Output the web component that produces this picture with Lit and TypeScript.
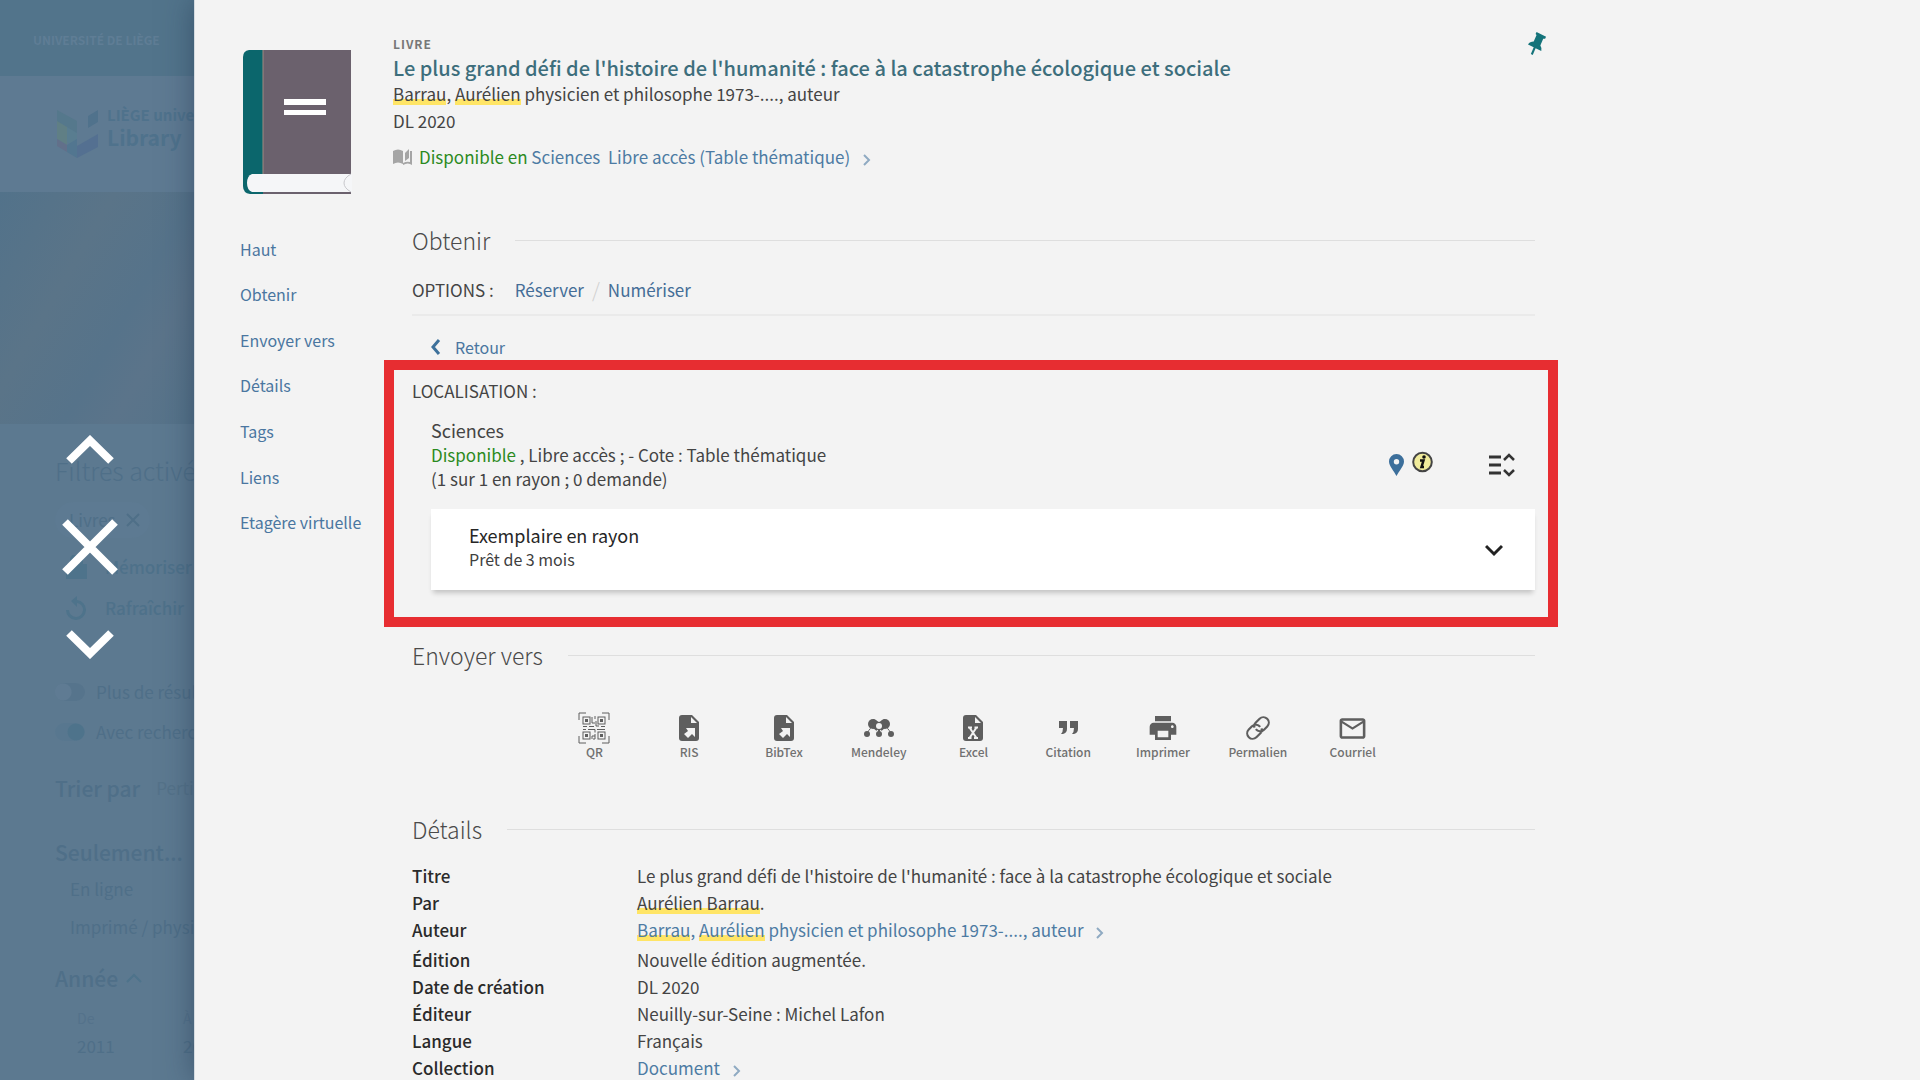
import { LitElement, html, css, svg, type TemplateResult } from "lit";
import { customElement, property } from "lit/decorators.js";

const chevronRight = html`<svg class="chev" viewBox="0 0 10 16" aria-hidden="true"><path d="M2 3l5 5-5 5" /></svg>`;

const fileShape = svg`<path d="M4 0h10l7 7v16a3 3 0 0 1-3 3H4a3 3 0 0 1-3-3V3a3 3 0 0 1 3-3z"/><path class="hole" d="M13 2v6h6z"/>`;

const exportArrow = svg`<path class="hole" d="M8 13h9v9l-3-3-4 4-2-2-2-2 4-3z"/>`;

const qrFinder = (x: number, y: number) => svg`
  <rect class="line" x=${x} y=${y} width="7" height="7"/>
  <rect x=${x + 2} y=${y + 2} width="3" height="3"/>`;

const icons: Record<string, TemplateResult> = {
  QR: html`<svg class="i32" viewBox="0 0 32 32">
    <path class="line" d="M1 8V1h7M24 1h7v7M31 24v7h-7M8 31H1v-7" />
    ${qrFinder(5, 5)}${qrFinder(20, 5)}${qrFinder(5, 20)}${qrFinder(20, 20)}
    <path class="line" d="M14 5v6h3M17 4v3M18 9v5h3M5 14.500h4M11 14.500h5M23 14.500h4M5 17.500h3M10 17.500h7v3M19 17.500h8M14 27v-3h3M17 22v5h-2" />
  </svg>`,
  file: html`<svg class="i26" viewBox="0 0 22 26">${fileShape}${exportArrow}</svg>`,
  Mendeley: html`<svg class="i32" viewBox="0 0 32 32">
    <path class="line" d="M4 23c0-4 3-5 5-9M28 23c0-4-3-5-5-9M16 23v-7" />
    <circle cx="10" cy="12" r="5" /><circle cx="22" cy="12" r="5" />
    <path d="M10 7l6 3 6-3v9l-6 5-6-5z" /><path class="hole" d="M13 19l3-2 3 2v5h-6z" />
    <path d="M15 17h2v6h-2z" />
    <circle class="hole" cx="16" cy="14" r="3" />
    <circle cx="4" cy="22" r="3" /><circle cx="16" cy="22" r="3" /><circle cx="28" cy="22" r="3" />
  </svg>`,
  Excel: html`<svg class="i26" viewBox="0 0 22 26">${fileShape}<path class="cross" d="M7.500 12.500l7 10.500M14.500 12.500l-7 10.500M6 12.500h4M12.500 12.500h3.500M6 23h3.500M12 23h4" /></svg>`,
  Citation: html`<svg class="i32" viewBox="0 0 32 32"><path d="M7 9h8v8q0 4-4 5H9q2-2 2-6H7zM18 9h8v8q0 4-4 5h-2q2-2 2-6h-4z" /></svg>`,
  Imprimer: html`<svg class="i32" viewBox="0 0 24 24"><path d="M19 8H5c-1.660 0-3 1.340-3 3v6h4v4h12v-4h4v-6c0-1.660-1.340-3-3-3zm-3 11H8v-5h8v5zm3-7c-.55 0-1-.45-1-1s.45-1 1-1 1 .45 1 1-.45 1-1 1zm-1-9H6v4h12V3z" /></svg>`,
  Permalien: html`<svg class="i26" viewBox="0 0 24 24"><path class="link" d="M10 13a5 5 0 0 0 7.540.540l3-3a5 5 0 0 0-7.070-7.070l-3.700 3.700q-2 2-1 4.500M14 11a5 5 0 0 0-7.540-.540l-3 3a5 5 0 0 0 7.070 7.070l3.700-3.700q2-2 1-4.500" /></svg>`,
  Courriel: html`<svg class="i31" viewBox="0 0 24 24"><path d="M22 6c0-1.100-.9-2-2-2H4c-1.100 0-2 .9-2 2v12c0 1.100.9 2 2 2h16c1.100 0 2-.9 2-2V6zm-2 0l-8 5-8-5h16zm0 12H4V8l8 5 8-5v10z" /></svg>`,
};

const base = css`
  * { box-sizing: border-box; }
  h1, h2, h3, p, dl, dd, dt, ul { margin: 0; padding: 0; font-weight: inherit; font-size: inherit; }
  ul { list-style: none; }
  a { color: inherit; text-decoration: none; }
  button { font: inherit; color: inherit; background: none; border: 0; padding: 0; cursor: pointer; text-align: left; }
  svg { display: block; flex: none; }
`;

@customElement("results-backdrop")
export class ResultsBackdrop extends LitElement {
  static styles = [base, css`
    :host { display: block; height: 100%; overflow: hidden; background: #5c7990; color: #4f6f88; font-size: 17px; line-height: 24px; white-space: nowrap; }
    .bar { height: 76px; background: #52748b; color: #5f7d95; padding: 28px 33px; font-size: 12px; font-weight: 700; }
    .brand { height: 116px; background: #5e7a92; color: #4f728c; display: flex; gap: 9px; padding: 29px 0 0 57px; font-weight: 700; }
    .logo { width: 41px; height: 48px; margin-top: 5px; }
    .uni { font-size: 15px; line-height: 20px; }
    .lib { font-size: 21px; line-height: 24px; }
    .hero { height: 232px; background: linear-gradient(120deg, #52728a, #5a7488 35%, #56738a 60%, #5b748a 75%, #55738a); }
    .filters { padding: 29px 0 0 55px; }
    .title { font-size: 25px; line-height: 34px; font-weight: 300; }
    .chip { display: inline-flex; align-items: center; gap: 10px; height: 36px; margin-top: 15px; padding: 0 10px 0 14px; border-radius: 18px; background: #5d7a92; }
    .chip svg { width: 14px; height: 14px; stroke: #4f6f88; stroke-width: 2; }
    .acts { padding-top: 8px; }
    .act { display: flex; align-items: center; gap: 18px; padding-left: 11px; height: 41px; font-weight: 500; color: #4e718a; }
    .act svg { width: 21px; height: 24px; fill: #4e738b; }
    .toggles { padding-top: 44px; }
    .toggle { display: flex; align-items: center; gap: 11px; height: 40px; }
    .toggle input { appearance: none; flex: none; margin: 0; width: 30px; height: 18px; border-radius: 9px; background: radial-gradient(circle at 8px 9px, #5f7b93 8px, #56748c 9px); }
    .toggle input:checked { background: radial-gradient(circle at 21px 9px, #4e738b 8px, #58778f 9px); }
    .sort { display: flex; align-items: center; gap: 16px; margin-top: 20px; height: 32px; }
    .sort select { appearance: none; border: 0; background: none; font: inherit; color: #547289; padding: 0; }
    .head { font-size: 21px; font-weight: 500; line-height: 32px; display: flex; align-items: center; gap: 8px; }
    .group { margin-top: 32px; }
    .facets { padding: 2px 0 0 15px; line-height: 38px; }
    .year { margin-top: 16px; }
    .year svg { width: 16px; height: 10px; fill: none; stroke: #4e738b; stroke-width: 2; }
    .years { display: grid; grid-template-columns: 106px 60px; padding: 11px 0 0 22px; color: #54728b; }
    .years label { font-size: 14px; display: grid; line-height: 26px; }
    .years input { border: 0; background: none; width: 60px; height: 28px; padding: 0; font: inherit; font-size: 17px; color: #4f6f88; }
  `];

  render() {
    return html`
      <div class="bar">UNIVERSITÉ DE LIÈGE</div>
      <div class="brand">
        <svg class="logo" viewBox="0 0 41 48" aria-hidden="true">
          <path fill="#55788c" d="M0 0l20 11v18L0 18z" /><path fill="#607f85" d="M0 11l10 6v18L0 29z" />
          <path fill="#597d90" d="M10 17l10 6v15l-10-6z" /><path fill="#62708a" d="M0 29l10 6v7L0 36z" />
          <path fill="#527690" d="M10 35l10-6v19l-10-6z" /><path fill="#547091" d="M20 36l21-12v13L20 48z" />
          <path fill="#50728c" d="M31 6l10-6v12l-10 6z" />
        </svg>
        <div><div class="uni">LIÈGE université</div><div class="lib">Library</div></div>
      </div>
      <div class="hero"></div>
      <div class="filters">
        <h2 class="title">Filtres activés</h2>
        <div class="chip">Livres <svg viewBox="0 0 14 14"><path d="M1 1l12 12M13 1L1 13" /></svg></div>
        <div class="acts">
          <button class="act"><svg viewBox="0 0 21 24"><path d="M0 9h4V5a6 6 0 0 1 13 0v4h4v15H0zM7 9h7V5a3 3 0 0 0-7 0z" /></svg>Mémoriser</button>
          <button class="act"><svg viewBox="0 0 21 24"><path d="M11 0v4a10 10 0 1 1-11 10h3a7 7 0 1 0 8-7v4L5 5z" /></svg>Rafraîchir</button>
        </div>
        <div class="toggles">
          <label class="toggle"><input type="checkbox" />Plus de résultats</label>
          <label class="toggle"><input type="checkbox" checked />Avec recherche</label>
        </div>
        <div class="sort"><label class="head" for="sort">Trier par</label><select id="sort"><option>Pertinence</option></select></div>
        <h3 class="head group">Seulement...</h3>
        <ul class="facets"><li>En ligne</li><li>Imprimé / physique</li></ul>
        <h3 class="head year">Année <svg viewBox="0 0 16 10"><path d="M1 9l7-7 7 7" /></svg></h3>
        <div class="years">
          <label>De<input value="2011" /></label>
          <label>À<input value="2024" /></label>
        </div>
      </div>`;
  }
}

@customElement("section-heading")
export class SectionHeading extends LitElement {
  @property() label = "";
  static styles = [base, css`
    :host { display: block; }
    h2 { display: flex; align-items: center; gap: 25px; font-size: 23px; line-height: 32px; font-weight: 300; color: #4a4a4a; }
    h2::after { content: ""; flex: 1; height: 1px; background: #dedede; }
  `];
  render() {
    return html`<h2>${this.label}</h2>`;
  }
}

type Row = { name: string; value: TemplateResult | string; link?: boolean };

const rows: Row[] = [
  { name: "Titre", value: "Le plus grand défi de l'histoire de l'humanité : face à la catastrophe écologique et sociale" },
  { name: "Par", value: html`<mark>Aurélien Barrau</mark>.` },
  { name: "Auteur", value: html`<mark>Barrau</mark>, <mark>Aurélien</mark> physicien et philosophe 1973-...., auteur`, link: true },
  { name: "Édition", value: "Nouvelle édition augmentée." },
  { name: "Date de création", value: "DL 2020" },
  { name: "Éditeur", value: "Neuilly-sur-Seine : Michel Lafon" },
  { name: "Langue", value: "Français" },
  { name: "Collection", value: "Document", link: true },
];

const targets = ["QR", "RIS", "BibTex", "Mendeley", "Excel", "Citation", "Imprimer", "Permalien", "Courriel"];
const sections = ["Haut", "Obtenir", "Envoyer vers", "Détails", "Tags", "Liens", "Etagère virtuelle"];

@customElement("app-root")
export class AppRoot extends LitElement {
  static styles = [base, css`
    :host { display: grid; grid-template-columns: 194px 1fr; height: 100vh; overflow: hidden; font-family: "Noto Sans CJK SC", "Open Sans", sans-serif; font-size: 17px; line-height: 24px; color: #444; }
    .side { position: relative; min-height: 0; }
    .controls { position: absolute; inset: 0; display: flex; flex-direction: column; align-items: center; justify-content: center; gap: 55px; padding: 14px 15px 0 0; }
    .controls svg { fill: none; stroke: #fff; stroke-width: 8; }
    .arrow { width: 48px; height: 29px; }
    .close { width: 56px; height: 56px; }
    .panel { position: relative; background: #f3f3f3; border-left: 1px solid #d5dbe0; box-shadow: 0 0 28px rgba(30, 50, 75, 0.5); min-width: 0; overflow: hidden; }
    .record { display: grid; grid-template-columns: 153px minmax(0, 1fr); max-width: 1398px; padding: 32px 46px 0 45px; }
    .cover { width: 110px; height: 146px; margin: 17px 0 0 2px; }
    .brief { position: relative; min-height: 192px; }
    .pin { position: absolute; top: 0; right: 0; }
    .pin svg { width: 19px; height: 23px; fill: #14737a; }
    .type { font-size: 12px; line-height: 24px; font-weight: 700; color: #777; letter-spacing: 1px; }
    .name { font-size: 20px; line-height: 24px; font-weight: 500; color: #3d6e7c; }
    .by { line-height: 27px; }
    mark { color: inherit; background: linear-gradient(#ffe566, #ffe566) 0 18px / 100% 6px no-repeat; }
    .avail { display: flex; align-items: center; gap: 6px; margin-top: 11px; line-height: 24px; color: #4d7ba3; }
    .avail svg:first-child { width: 20px; height: 16px; fill: #a5a5a5; }
    .green { color: #2c8a1e; }
    .chev { display: inline-block; width: 10px; height: 16px; margin-left: 8px; fill: none; stroke: #8faac2; stroke-width: 2; vertical-align: -4px; }
    nav { display: grid; grid-auto-rows: 1fr; align-items: center; height: 319px; margin-top: 2px; color: #4a76a0; font-size: 16px; }
    .body { padding: 0 12px 0 19px; }
    .options { display: flex; align-items: center; padding: 16px 0 8px; border-bottom: 2px solid #eaeaea; margin-top: 2px; line-height: 32px; }
    .opt { color: #446d97; }
    .caps { margin-right: 21px; }
    .slash { color: #d0d0d0; margin: 0 8px; font-size: 20px; font-weight: 300; }
    .back { display: flex; align-items: center; gap: 14px; margin: 18px 0 0 18px; color: #4a76a0; font-size: 16px; line-height: 26px; }
    .back svg { width: 11px; height: 16px; fill: none; stroke: #3d719b; stroke-width: 3; }
    .holding { position: relative; margin-top: 1px; padding: 18px 0 24px; }
    .frame { position: absolute; inset: -1px -23px -13px -28px; border: 10px solid #e72d31; pointer-events: none; }
    .place { display: flex; align-items: flex-end; padding: 14px 20px 18px 19px; }
    .where { flex: 1; }
    .where h3 { font-size: 18px; line-height: 26px; }
    .where p { line-height: 24px; }
    .tools { display: flex; align-items: center; gap: 8px; padding-bottom: 13px; }
    .map { width: 15px; height: 22px; fill: #3c6f9b; }
    .info { width: 21px; height: 27px; }
    .collapse { width: 26px; height: 24px; margin-left: 48px; fill: none; stroke: #333; stroke-width: 3; }
    .item { display: flex; align-items: center; margin-left: 19px; padding: 14px 32px 19px 38px; background: #fff; color: #262626; box-shadow: 0 5px 5px -2px rgba(0, 0, 0, 0.2); }
    .item > div { flex: 1; }
    .item h3 { font-size: 18px; line-height: 24px; }
    .item p { font-size: 16px; line-height: 24px; color: #3f3f3f; }
    .item button { padding-top: 5px; }
    .item svg { width: 18px; height: 14px; fill: none; stroke: #222; stroke-width: 3; }
    .send { margin-top: 25px; }
    .exports { display: grid; grid-template-columns: repeat(9, 1fr); padding: 41px 135px 52px; }
    .exports button { display: flex; flex-direction: column; align-items: center; font-size: 12px; font-weight: 500; line-height: 18px; color: #707070; }
    .pic { height: 32px; display: flex; align-items: center; margin-bottom: -1px; }
    .pic svg { fill: #5e5e5e; }
    .i32 { width: 32px; height: 32px; }
    .i31 { width: 31px; height: 31px; }
    .i26 { height: 26px; width: 26px; }
    .pic .line { fill: none; stroke: #5e5e5e; stroke-width: 1; }
    .pic .link { fill: none; stroke: #5e5e5e; stroke-width: 2; }
    .pic .hole { fill: #f3f3f3; }
    .pic .cross { fill: none; stroke: #f3f3f3; stroke-width: 2; }
    .details { display: grid; grid-template-columns: 225px 1fr; margin-top: 17px; line-height: 27px; }
    dt { font-weight: 500; color: #2a2a2a; }
    dd.link { padding-bottom: 3px; color: #4d7ba3; }
  `];

  render() {
    return html`
      <div class="side">
        <results-backdrop></results-backdrop>
        <div class="controls">
          <button aria-label="Précédent"><svg class="arrow" viewBox="0 0 48 29"><path d="M3 26L24 5.500 45 26" /></svg></button>
          <button aria-label="Fermer"><svg class="close" viewBox="0 0 56 56"><path d="M3 3l50 50M53 3L3 53" /></svg></button>
          <button aria-label="Suivant"><svg class="arrow" viewBox="0 0 48 29"><path d="M3 3l21 20.500L45 3" /></svg></button>
        </div>
      </div>
      <main class="panel">
        <div class="record">
          <svg class="cover" viewBox="0 0 110 146" aria-hidden="true">
            <path fill="#0b666c" d="M7 1h15v144H8q-7-1-7-8V8q0-6 6-7z" />
            <path fill="#6b616d" d="M21 1h88v144H21z" />
            <path fill="none" stroke="#a08a80" d="M21 1v124" />
            <path fill="#f5f6f8" d="M10 125h100v18H10q-5-2-5-9t5-9z" />
            <path fill="none" stroke="#c8c8cc" d="M109 125q-7 4-7 9t7 9" />
            <path fill="#fff" d="M42 50h42v6H42zM42 61h42v5H42z" />
          </svg>
          <header class="brief">
            <p class="type">LIVRE</p>
            <h1 class="name">Le plus grand défi de l'histoire de l'humanité : face à la catastrophe écologique et sociale</h1>
            <p class="by"><mark>Barrau</mark>, <mark>Aurélien</mark> physicien et philosophe 1973-...., auteur</p>
            <p class="by">DL 2020</p>
            <a class="avail" href="#obtenir">
              <svg viewBox="0 0 20 16"><path d="M0 2q5-3 10 0v13q-5-3-10 0zM12 4l4-4v9l-4 3zM17 2h2v14q-4-3-9 0v-2q4-2 7-1z" /></svg>
              <span><span class="green">Disponible en</span> Sciences&nbsp; Libre accès (Table thématique) ${chevronRight}</span>
            </a>
            <button class="pin" aria-label="Épingler">
              <svg viewBox="0 0 20 24"><path d="M9 0l10 5-1 2h-2l-3 7q2 3 1 6l-6-3-3 7-2-1 3-7-6-3q2-3 6-3l3-7-1-1z" /></svg>
            </button>
          </header>
          <nav>${sections.map((s) => html`<a href="#">${s}</a>`)}</nav>
          <div class="body">
            <section-heading label="Obtenir"></section-heading>
            <div class="options">
              <span class="caps">OPTIONS :</span>
              <button class="opt">Réserver</button><span class="slash">/</span><button class="opt">Numériser</button>
            </div>
            <button class="back"><svg viewBox="0 0 11 16"><path d="M9 1L3 8l6 7" /></svg>Retour</button>
            <section class="holding">
              <div class="frame"></div>
              <h3>LOCALISATION :</h3>
              <div class="place">
                <div class="where">
                  <h3>Sciences</h3>
                  <p><span class="green">Disponible</span> , Libre accès ; - Cote : Table thématique</p>
                  <p>(1 sur 1 en rayon ; 0 demande)</p>
                </div>
                <div class="tools">
                  <svg class="map" viewBox="0 0 15 22"><path fill-rule="evenodd" d="M7.500 0A7.500 7.500 0 0 1 15 7.500C15 12 10 17 7.500 22 5 17 0 12 0 7.500A7.500 7.500 0 0 1 7.500 0zm0 5a2.700 2.700 0 1 0 0 5.400 2.700 2.700 0 0 0 0-5.400z" /></svg>
                  <svg class="info" viewBox="0 0 21 27"><circle cx="10.500" cy="11" r="9.300" fill="#f0eb9b" stroke="#444" stroke-width="2" /><circle cx="12" cy="6" r="1.800" fill="#111" /><path d="M8 9.500h3.500L9.500 16h2.500" fill="none" stroke="#111" stroke-width="2.500" /></svg>
                  <button aria-label="Tout replier"><svg class="collapse" viewBox="0 0 26 24"><path d="M0 4h12M0 12h12M0 20h12" /><path d="M15 7l5-5 5 5M15 17l5 5 5-5" stroke-width="2.500" /></svg></button>
                </div>
              </div>
              <div class="item">
                <div><h3>Exemplaire en rayon</h3><p>Prêt de 3 mois</p></div>
                <button aria-label="Déplier"><svg viewBox="0 0 18 14"><path d="M1 3l8 8 8-8" /></svg></button>
              </div>
            </section>
            <section-heading class="send" label="Envoyer vers"></section-heading>
            <div class="exports">
              ${targets.map((e) => html`<button><span class="pic">${icons[e] ?? icons.file}</span>${e}</button>`)}
            </div>
            <section-heading label="Détails"></section-heading>
            <dl class="details">
              ${rows.map((r) => html`<dt>${r.name}</dt><dd class=${r.link ? "link" : "plain"}>${r.link ? html`<a href="#">${r.value} ${chevronRight}</a>` : r.value}</dd>`)}
            </dl>
          </div>
        </div>
      </main>`;
  }
}
